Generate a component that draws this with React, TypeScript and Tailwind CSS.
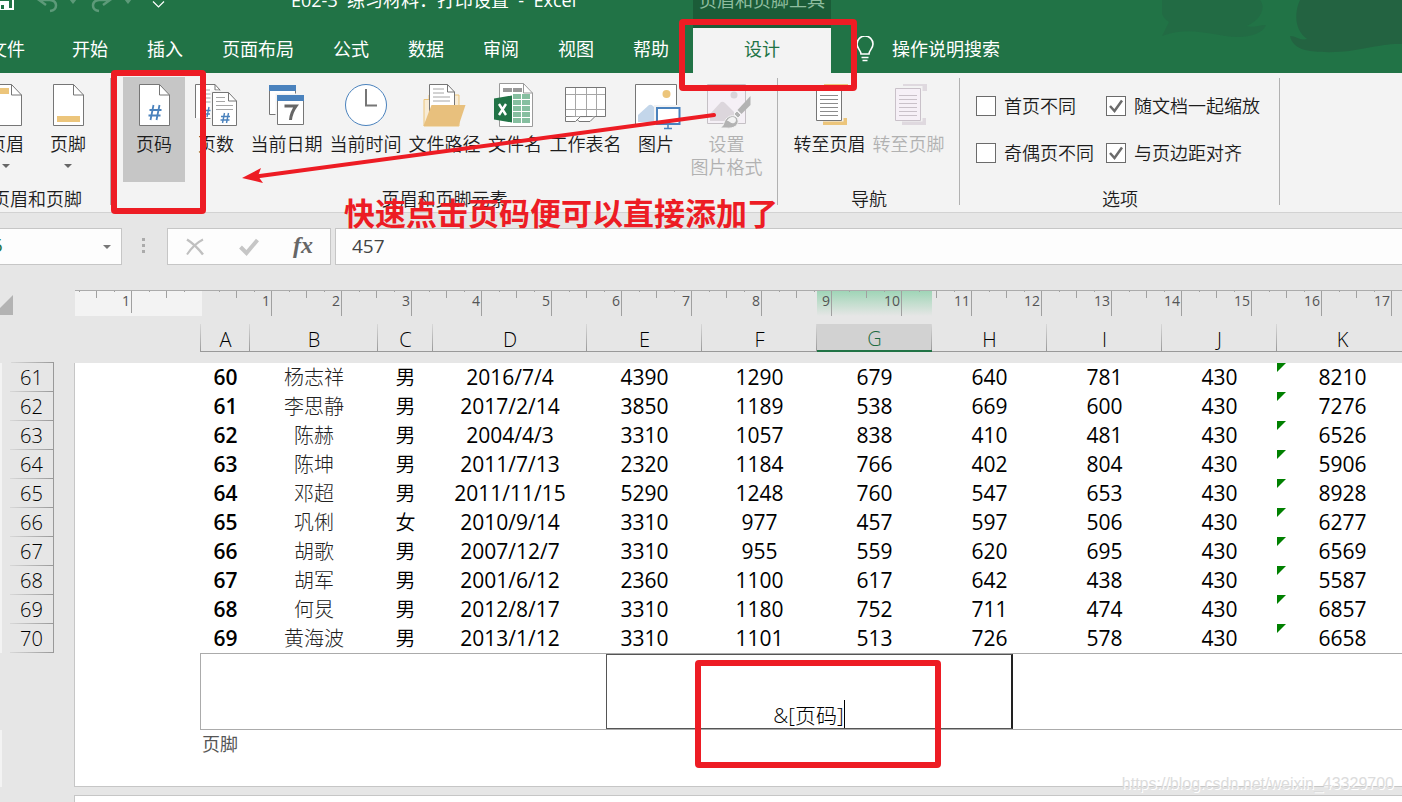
import type { ReactNode } from 'react';
import clsx from 'clsx';

const columns = ['A', 'B', 'C', 'D', 'E', 'F', 'G', 'H', 'I', 'J', 'K'];

const rows = [
  [61, '60', '杨志祥', '男', '2016/7/4', '4390', '1290', '679', '640', '781', '430', '8210'],
  [62, '61', '李思静', '男', '2017/2/14', '3850', '1189', '538', '669', '600', '430', '7276'],
  [63, '62', '陈赫', '男', '2004/4/3', '3310', '1057', '838', '410', '481', '430', '6526'],
  [64, '63', '陈坤', '男', '2011/7/13', '2320', '1184', '766', '402', '804', '430', '5906'],
  [65, '64', '邓超', '男', '2011/11/15', '5290', '1248', '760', '547', '653', '430', '8928'],
  [66, '65', '巩俐', '女', '2010/9/14', '3310', '977', '457', '597', '506', '430', '6277'],
  [67, '66', '胡歌', '男', '2007/12/7', '3310', '955', '559', '620', '695', '430', '6569'],
  [68, '67', '胡军', '男', '2001/6/12', '2360', '1100', '617', '642', '438', '430', '5587'],
  [69, '68', '何炅', '男', '2012/8/17', '3310', '1180', '752', '711', '474', '430', '6857'],
  [70, '69', '黄海波', '男', '2013/1/12', '3310', '1101', '513', '726', '578', '430', '6658'],
];

const tabs = ['开始', '插入', '页面布局', '公式', '数据', '审阅', '视图', '帮助'];

function Icon({ children }: { children: ReactNode }) {
  return (
    <svg width="48" height="44" viewBox="0 0 48 44" fill="none" className="shrink-0 overflow-visible" aria-hidden="true">
      {children}
    </svg>
  );
}

function PageShape() {
  return (
    <>
      <path d="M9.5.5h20l10 10.5v30.5h-30z" fill="#fff" stroke="#767676" />
      <path d="M29.5.5V11h10" stroke="#767676" />
    </>
  );
}

function HeaderIcon() {
  return (
    <Icon>
      <PageShape />
      <path d="M13 4h14v6H13z" fill="#ecc57b" />
    </Icon>
  );
}

function FooterIcon() {
  return (
    <Icon>
      <PageShape />
      <path d="M13 32h23v6H13z" fill="#ecc57b" />
    </Icon>
  );
}

function PageNumberIcon() {
  return (
    <Icon>
      <PageShape />
      <path d="M23.5 21l-3 15M29.5 21l-3 15M19.5 26h12M18.5 31.5h12" stroke="#4a82bd" strokeWidth="1.8" />
    </Icon>
  );
}

function PageCountIcon() {
  return (
    <Icon>
      <path d="M3.5 34V.5H23l5 5.5v28.5h-19" fill="#fff" stroke="#767676" />
      <path d="M23 .5V6h5" stroke="#767676" />
      <path d="M8 6h10M8 10h12M8 14h12M8 18h12" stroke="#a6a6a6" />
      <path d="M13 23l-2 10M17 23l-2 10M9 26.500h10M8 30h10" stroke="#4a82bd" strokeWidth="1.4" />
      <path d="M18.500 6.500h20l8 8v29h-28z" fill="#f3f3f3" />
      <path d="M20.500 8.500h16l8 8.500v24.500h-24z" fill="#fff" stroke="#767676" />
      <path d="M36.500 8.500V17h8" stroke="#767676" />
      <path d="M24 13.500h9M24 17.500h9M24 21.500h17M24 25.500h17" stroke="#a6a6a6" />
      <path d="M32.500 29l-2 10M36.500 29l-2 10M29 32.500h9M28.500 36h9" stroke="#4a82bd" strokeWidth="1.400" />
    </Icon>
  );
}

function DateIcon() {
  return (
    <Icon>
      <path d="M6.500 1.500h26v29h-26z" fill="#fff" stroke="#767676" />
      <path d="M6 1h27v6H6z" fill="#4a82bd" />
      <path d="M12.500 9.500h30v33h-30z" fill="#f3f3f3" />
      <path d="M14.500 11.500h26v29h-26z" fill="#fff" stroke="#767676" />
      <path d="M14 11h27v6H14z" fill="#4a82bd" />
      <path d="M21.500 22h11.500c-3 4-5 8-5.500 14" stroke="#666" strokeWidth="3" />
    </Icon>
  );
}

function TimeIcon() {
  return (
    <Icon>
      <circle cx="24" cy="21" r="20.500" fill="#fff" stroke="#4a82bd" />
      <path d="M24 5v16.500h11" stroke="#767676" strokeWidth="2" />
    </Icon>
  );
}

function PathIcon() {
  return (
    <Icon>
      <path d="M3 42V15.500h5V11h30v31z" fill="#f8ecd6" stroke="#ecc57b" />
      <path d="M8.500.500h18l7 7.500v20h-25z" fill="#fff" stroke="#767676" />
      <path d="M26.500.500V8h7" stroke="#767676" />
      <path d="M12 5h11M12 9h11M12 13h17M12 17h17" stroke="#a6a6a6" />
      <path d="M2.500 42l8-21h34l-7 21z" fill="#e8c07d" />
    </Icon>
  );
}

function FileNameIcon() {
  return (
    <Icon>
      <path d="M8.500-.500h24l9 9.500v33.500h-33z" fill="#fff" stroke="#9a9a9a" />
      <path d="M32.500-.500V9h9" stroke="#9a9a9a" />
      <path d="M12 4h9v4h-9zM22 4h9v4h-9z" fill="#999" />
      <path d="M22 10h17v29H22z" fill="#86bfa0" />
      <path d="M30.500 10v29M22 15.500h17M22 21.500h17M22 27.500h17M22 33.500h17" stroke="#fff" />
      <path d="M3 14.500l18-3v27l-18-3z" fill="#217346" />
      <path d="M8 20l7 11M15 20l-7 11" stroke="#fff" strokeWidth="2.400" />
    </Icon>
  );
}

function SheetNameIcon() {
  return (
    <Icon>
      <path d="M3.500 3.500h40v29h-40z" fill="#fff" />
      <path d="M13.500 4v28M24.500 4v28M34.500 4v28M4 10.500h39M4 25.500h39" stroke="#a6a6a6" />
      <path d="M3.500 3.500h40v29h-40z" stroke="#767676" />
      <path d="M3.500 33v4.500h10l5-5M15 35l2 2.500h11l5-5" fill="#fff" stroke="#767676" />
    </Icon>
  );
}

function PictureIcon() {
  return (
    <Icon>
      <path d="M3.500.500h41v40h-41z" fill="#fff" stroke="#767676" />
      <circle cx="34.500" cy="10" r="4" fill="#ecc57b" />
      <path d="M6 38v-7l11-10q2-1 4 1l3 3v13z" fill="#c3d6ea" />
      <path d="M22 21h28v22H22z" fill="#f3f3f3" />
      <path d="M25 24h22.500v16H25z" fill="#fff" stroke="#4a82bd" strokeWidth="2" />
      <path d="M36 41v3M32 44.500h8" stroke="#4a82bd" strokeWidth="1.500" />
    </Icon>
  );
}

function FormatPictureIcon() {
  return (
    <Icon>
      <path d="M4.500.500h38v39h-38z" fill="#f5f0f6" stroke="#c5c0c5" />
      <circle cx="31" cy="11" r="3.500" fill="#d9d3d9" />
      <path d="M7 37v-7l11-12q2-1 4 1l9 9v9z" fill="#dcd6dc" />
      <path d="M47.500 12v9l-9 9-4-4z" fill="#b3b3b3" />
      <path d="M34 27l4 4-3 3-4-4z" fill="#b3b3b3" stroke="#f3f3f3" />
      <path d="M15 44c6 0 5-5 8-9 4-5 11-4 12 1s-4 9-12 8z" fill="#b3b3b3" stroke="#f3f3f3" />
      <path d="M24 37c2-5 9-5 9-1 0 2-2 4-4 3-2 0-2-2-5-2z" fill="#f3f3f3" />
    </Icon>
  );
}

function GoToIcon({ disabled }: { disabled?: boolean }) {
  const bar = disabled ? '#dfd9df' : '#ecc57b';
  const line = disabled ? '#c9c1c9' : '#767676';
  return (
    <Icon>
      <path d="M18 0h24v7H18zM17 34h24v7H17z" fill={bar} />
      <path d="M8 2h29.500v37H8z" fill="#f3f3f3" />
      <path d="M17 37.500h22v3.500H17z" fill={bar} />
      <path d="M10.500 4.500h25v32h-25z" fill={disabled ? '#f6f0f7' : '#fff'} stroke={line} />
      <path d="M14 11.500h18M14 15.500h18M14 19.500h18M14 23.500h18M14 27.500h18M14 31.500h18" stroke={disabled ? '#c9c1c9' : '#8c8c8c'} />
    </Icon>
  );
}

type ToolProps = { icon: ReactNode; label: string; second?: string; wide?: boolean; active?: boolean; disabled?: boolean; menu?: boolean };

function Tool({ icon, label, second, wide, active, disabled, menu }: ToolProps) {
  return (
    <button
      type="button"
      disabled={disabled}
      className={clsx(
        'flex h-[105px] shrink-0 flex-col items-center whitespace-nowrap pt-[7px]',
        wide ? 'w-[79px]' : 'w-[62px]',
        active && 'bg-[#c6c6c6]',
        disabled && 'text-[#b1b1b1]'
      )}
    >
      {icon}
      <span className="mt-[5px] leading-[23px]">{label}</span>
      {second && <span className="leading-[23px]">{second}</span>}
      {menu && (
        <svg width="8" height="4" viewBox="0 0 8 4" className="mt-2" aria-hidden="true">
          <path d="M0 0h8L4 4z" fill="#666" />
        </svg>
      )}
    </button>
  );
}

function Group({ label, children }: { label: string; children: ReactNode }) {
  return (
    <section className="flex shrink-0 flex-col items-center pt-1">
      <div className="flex">{children}</div>
      <h2 className="leading-[34px]">{label}</h2>
    </section>
  );
}

function Separator() {
  return <div className="ml-[11px] mr-3 mt-[5px] h-[127px] w-px shrink-0 bg-[#b1b1b1]" />;
}

function CheckOption({ label, checked }: { label: string; checked?: boolean }) {
  return (
    <label className="flex items-center gap-2 whitespace-nowrap">
      <span className="relative flex">
        <input type="checkbox" defaultChecked={checked} className="peer size-5 appearance-none border border-[#6b6b6b] bg-white" />
        <svg viewBox="0 0 20 20" className="pointer-events-none invisible absolute inset-0 size-5 peer-checked:visible" fill="none" aria-hidden="true">
          <path d="M4 10l4.500 5L16 4.500" stroke="#6b6b6b" strokeWidth="2.500" />
        </svg>
      </span>
      {label}
    </label>
  );
}

function TitleBar() {
  return (
    <header className="-mt-7 flex h-14 shrink-0 items-center whitespace-nowrap text-lg text-white">
      <div className="flex w-[291px] shrink-0 items-center">
        <svg width="180" height="24" viewBox="0 0 180 24" fill="none" className="mt-px" aria-hidden="true">
          <path d="M-6 2h19v18H-6z" stroke="#fff" strokeWidth="2" />
          <path d="M-2 12H9v8H-2z" fill="#fff" />
          <path d="M1 16h3v4H1z" fill="#217346" />
          <path d="M46 5l-7 6 7 5M39 11h11c8 1 8 10 0 11" stroke="#5d9a79" strokeWidth="2.500" />
          <path d="M69 10h8l-4 5z" fill="#5d9a79" />
          <path d="M103 5l7 6-7 5M110 11H99c-8 1-8 10 0 11" stroke="#5d9a79" strokeWidth="2.500" />
          <path d="M124 10h8l-4 5z" fill="#5d9a79" />
          <path d="M153 12.500l5.500 5.500 5.500-5.500" stroke="#fff" strokeWidth="1.200" />
        </svg>
      </div>
      <h1 className="w-[402px] shrink-0 whitespace-pre">E02-3  练习材料：打印设置  -  Excel</h1>
      <div className="flex h-full w-[138px] shrink-0 items-center justify-center bg-[#1b5c38] text-[#8ebd9f]">页眉和页脚工具</div>
    </header>
  );
}

function TabBar() {
  return (
    <nav className="flex h-[45px] shrink-0 items-center whitespace-nowrap text-lg text-white">
      <button type="button" className="-ml-[11px] mr-[47px] pb-[3px]">文件</button>
      <div className="flex shrink-0 gap-[39px]">
        {tabs.map((tab) => (
          <button type="button" key={tab} className="pb-[3px]">{tab}</button>
        ))}
      </div>
      <button type="button" className="ml-6 h-full w-[138px] shrink-0 bg-[#f3f3f3] pb-[3px] text-[#217346]">设计</button>
      <button type="button" className="ml-6 flex items-center gap-[17px] pb-[3px]">
        <svg width="20" height="26" viewBox="0 0 20 26" fill="none" stroke="#fff" strokeWidth="1.600" aria-hidden="true">
          <path d="M6 18c0-4-4-5-4-10a8 8 0 0 1 16 0c0 5-4 6-4 10zM6.500 21.500h7M7.500 24.500h5" />
        </svg>
        操作说明搜索
      </button>
    </nav>
  );
}

function Ribbon() {
  return (
    <div className="flex h-[140px] shrink-0 border-b border-[#d2d2d2] bg-[#f3f3f3] text-lg font-[350] text-[#1c1c1c]">
      <div className="-ml-[25px] flex">
        <Group label="页眉和页脚">
          <Tool icon={<HeaderIcon />} label="页眉" menu />
          <Tool icon={<FooterIcon />} label="页脚" menu />
        </Group>
      </div>
      <Separator />
      <Group label="页眉和页脚元素">
        <Tool icon={<PageNumberIcon />} label="页码" active />
        <Tool icon={<PageCountIcon />} label="页数" />
        <Tool icon={<DateIcon />} label="当前日期" wide />
        <Tool icon={<TimeIcon />} label="当前时间" wide />
        <Tool icon={<PathIcon />} label="文件路径" wide />
        <Tool icon={<FileNameIcon />} label="文件名" />
        <Tool icon={<SheetNameIcon />} label="工作表名" wide />
        <Tool icon={<PictureIcon />} label="图片" />
        <Tool icon={<FormatPictureIcon />} label="设置" second="图片格式" wide disabled />
      </Group>
      <Separator />
      <Group label="导航">
        <Tool icon={<GoToIcon />} label="转至页眉" wide />
        <Tool icon={<GoToIcon disabled />} label="转至页脚" wide disabled />
      </Group>
      <Separator />
      <Group label="选项">
        <div className="grid h-[105px] grid-cols-[130px_162px] grid-rows-[47px_47px] pl-1 pt-[5px]">
          <CheckOption label="首页不同" />
          <CheckOption label="随文档一起缩放" checked />
          <CheckOption label="奇偶页不同" />
          <CheckOption label="与页边距对齐" checked />
        </div>
      </Group>
      <Separator />
    </div>
  );
}

function FormulaBar() {
  return (
    <div className="flex h-[77px] shrink-0 items-start pt-[15px] text-[19px] text-[#444]">
      <div className="-ml-10 flex h-[37px] w-[162px] shrink-0 items-center border border-[#c6c6c6] bg-[#fdfdfd] pr-[10px]">
        <input aria-label="名称框" defaultValue="G66" className="min-w-0 flex-1 pb-0.5 pl-[6px] text-[#217346] outline-none" />
        <svg width="8" height="4" viewBox="0 0 8 4" aria-hidden="true">
          <path d="M0 0h8L4 4z" fill="#777" />
        </svg>
      </div>
      <svg width="45" height="37" viewBox="0 0 45 37" fill="#ababab" className="shrink-0" aria-hidden="true">
        <path d="M20 10h3v3h-3zM20 16h3v3h-3zM20 22h3v3h-3z" />
      </svg>
      <div className="flex h-[37px] w-[164px] shrink-0 border border-[#c6c6c6] bg-[#fdfdfd]">
        <button type="button" aria-label="取消" className="flex flex-1 items-center justify-center">
          <svg width="18" height="18" viewBox="0 0 18 18" fill="none" aria-hidden="true">
            <path d="M1 1.500q8 5 16 15" stroke="#c0c0c0" strokeWidth="2.500" />
            <path d="M17 1.500Q8 6 1 16.500" stroke="#c0c0c0" strokeWidth="2" />
          </svg>
        </button>
        <button type="button" aria-label="输入" className="flex flex-1 items-center justify-center">
          <svg width="20" height="18" viewBox="0 0 20 18" fill="none" aria-hidden="true">
            <path d="M1.500 9l6 6L18.500 2" stroke="#c6c6c6" strokeWidth="4" />
          </svg>
        </button>
        <button type="button" className="flex-1 pb-1 font-['Liberation_Serif',serif] text-2xl font-bold italic leading-none text-[#666]">fx</button>
      </div>
      <input aria-label="编辑栏" defaultValue="457" className="ml-1 h-[37px] min-w-0 flex-1 border border-r-0 border-[#c6c6c6] bg-[#fdfdfd] pb-0.5 pl-4 outline-none" />
    </div>
  );
}

function RulerUnit({ label, short }: { label?: number; short?: boolean }) {
  return (
    <div className="relative h-[25px] w-[70px] shrink-0 pr-0.5 text-right">
      <svg width="70" height="25" viewBox="0 0 70 25" fill="none" stroke="#a0a0a0" className="absolute inset-0" aria-hidden="true">
        <path d="M17.500 0v1M34.500 0v7M52.500 0v1" />
        {label && <path d={short ? 'M69.500 0v22' : 'M69.500 0v25'} />}
      </svg>
      {label}
    </div>
  );
}

function Ruler() {
  return (
    <div className="flex h-[34px] shrink-0 text-sm leading-5 text-[#555]">
      <svg width="75" height="26" viewBox="0 0 75 26" className="shrink-0" aria-hidden="true">
        <path d="M13 5v20H-7z" fill="#b3b3b3" />
      </svg>
      <div className="relative flex h-[26px] min-w-0 flex-1 overflow-hidden border-t border-[#ababab]">
        <div className="flex w-[127px] shrink-0 justify-end overflow-hidden bg-[#f3f3f3]">
          <RulerUnit label={1} short />
          <RulerUnit />
        </div>
        <div className="absolute left-[742px] h-[25px] w-[115px] bg-linear-to-b from-[#9fd5b7] to-[#e6e6e6]" />
        {Array.from({ length: 40 }, (_, i) => (
          <RulerUnit key={i} label={i + 1} />
        ))}
      </div>
    </div>
  );
}

const rowLine = 'bg-[linear-gradient(to_right,#d8d8d8,#999)] bg-size-[43px_1px] bg-bottom-right bg-no-repeat';
const colLine = 'bg-[linear-gradient(to_bottom,#d8d8d8,#999)] bg-size-[1px_100%] bg-right bg-no-repeat';

function Sheet() {
  return (
    <table className="w-full min-w-[1408px] shrink-0 table-fixed border-separate border-spacing-0 text-center">
      <colgroup>
        <col className="w-[2px]" />
        <col className="w-[52px]" />
        <col className="w-[20px]" />
        <col className="w-[127px]" />
        <col className="w-[49px]" />
        <col className="w-[128px]" />
        <col className="w-[55px]" />
        <col className="w-[154px]" />
        <col className="w-[115px]" />
        <col className="w-[115px]" />
        <col className="w-[115px]" />
        <col className="w-[115px]" />
        <col className="w-[115px]" />
        <col className="w-[115px]" />
        <col />
      </colgroup>
      <thead className="text-xl/none">
        <tr className="h-7">
          <td colSpan={3} />
          <td className={colLine} />
          {columns.map((c) => (
            <th
              key={c}
              scope="col"
              className={clsx(
                'border-b pt-1 font-light',
                colLine,
                c === 'G' ? 'border-b-2 border-[#217346] bg-[#d2d2d2] text-[#1e6b41]' : 'border-[#999] text-black'
              )}
            >
              {c}
            </th>
          ))}
        </tr>
        <tr className="h-[11px]">
          <td />
          <td className={rowLine} />
          <td colSpan={13} />
        </tr>
      </thead>
      <tbody className="text-[21px] leading-none text-black">
        {rows.map(([row, ...cells]) => (
          <tr key={row} className="h-[29px]">
            <td className="bg-[#f3f3f3]" />
            <th scope="row" className={clsx('border-r border-[#999] pl-2 text-xl/none font-light', rowLine)}>{row}</th>
            <td />
            <td className="border-l border-[#c6c6c6] bg-white" />
            {cells.map((cell, i) => (
              <td
                key={i}
                className={clsx(
                  'relative bg-white',
                  i === 0 && 'font-semibold',
                  i === 1 && 'text-xl/none font-light text-[#222]',
                  i === 2 && 'text-xl/none font-[350]'
                )}
              >
                {i === 10 && <span className="absolute left-0 top-0 size-[9px] bg-[#008000] [clip-path:polygon(0_0,100%_0,0_100%)]" />}
                {cell}
              </td>
            ))}
          </tr>
        ))}
      </tbody>
    </table>
  );
}

function PageFooter() {
  return (
    <div className="flex shrink-0">
      <div className="mt-[77px] h-[57px] w-[2px] bg-[#f3f3f3]" />
      <div className="ml-[72px] h-[134px] min-w-0 flex-1 border-b border-l border-[#c6c6c6] bg-white pl-[125px]">
        <div className="flex h-[77px] border-y border-l border-[#ababab]">
          <input aria-label="页脚左侧" className="w-[405px] shrink-0 outline-none" />
          <div className="flex w-[407px] shrink-0 items-end justify-center border border-r-2 border-[#555] border-r-[#222] text-[21px] font-light text-black">
            <input aria-label="页脚中部" defaultValue="&[页码]" className="h-7 pt-1 outline-none [field-sizing:content]" />
            <span className="h-7 w-px bg-black" />
          </div>
          <input aria-label="页脚右侧" className="min-w-0 flex-1 outline-none" />
        </div>
        <p className="pl-[2px] text-lg leading-7 text-[#555]">页脚</p>
      </div>
    </div>
  );
}

// 红色标注：方框、箭头和说明文字
function Annotations() {
  return (
    <div className="pointer-events-none absolute inset-0">
      <div className="absolute left-[111px] top-[70px] h-[144px] w-[95px] rounded-[4px] border-6 border-[#ed1c24]" />
      <div className="absolute left-[679px] top-[19px] h-[72px] w-[178px] rounded-[4px] border-6 border-[#ed1c24]" />
      <div className="absolute left-[695px] top-[660px] h-[108px] w-[246px] rounded-[4px] border-6 border-[#ed1c24]" />
      <svg width="480" height="80" viewBox="0 0 480 80" className="absolute left-[240px] top-[108px]" aria-hidden="true">
        <path d="M474 7L16 68.500" stroke="#ed1c24" strokeWidth="4" strokeLinecap="round" />
        <path d="M2 70l19-10-3 8 5 7z" fill="#ed1c24" />
      </svg>
      <p className="absolute left-[344px] top-[193px] whitespace-nowrap text-[31px] font-bold leading-10 text-[#ed1c24]">
        快速点击页码便可以直接添加了
      </p>
      <p className="absolute bottom-2 right-2 font-['Liberation_Sans',sans-serif] text-base leading-5 text-[#dcdcdc] [text-shadow:1px_1px_0_#fff]">
        https://blog.csdn.net/weixin_43329700
      </p>
    </div>
  );
}

export default function App() {
  return (
    <main className="relative flex min-h-screen flex-col overflow-hidden bg-[#e6e6e6] font-['Open_Sans','Noto_Sans_CJK_SC',sans-serif]">
      <div className="relative shrink-0 bg-[#217346]">
        <svg width="240" height="60" viewBox="0 0 240 60" className="absolute right-0 top-0" aria-hidden="true">
          <path d="M0 0h98c8 10-4 23-14 26 8 2 14-1 20-1-3 8-15 12-28 12-25 0-45-12-76-1l7-14C-2 16-2 8 0 0z" fill="#226b44" />
          <path d="M138 0h102v44c-28-1-50 12-92 7-14-2-19-9-20-15 6 0 10 5 17 3C130 28 134 8 138 0z" fill="#236341" />
        </svg>
        <TitleBar />
        <TabBar />
      </div>
      <Ribbon />
      <FormulaBar />
      <Ruler />
      <Sheet />
      <PageFooter />
      <div className="ml-[74px] mt-2 flex-1 border-l border-t border-[#c6c6c6] bg-white" />
      <Annotations />
    </main>
  );
}
